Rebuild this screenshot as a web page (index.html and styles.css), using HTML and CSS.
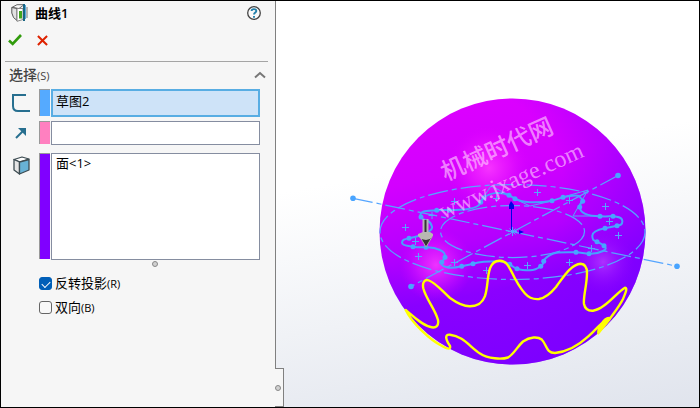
FILE: index.html
```html
<!DOCTYPE html>
<html lang="zh-CN">
<head>
<meta charset="utf-8">
<meta name="viewport" content="width=device-width, initial-scale=1">
<title>曲线1</title>
<link rel="stylesheet" href="styles.css">
</head>
<body>
<main class="app">
  <aside class="panel">
    <header class="title-bar">
      <svg class="title-icon" width="17" height="18" viewBox="0 0 17 18" aria-hidden="true">
        <path d="M.8 3.500 6 .7h7L8 4.500z" fill="#fafafa" stroke="#666"/>
        <path d="M.8 3.500 6 4.500v12l-3.500-3L.8 9z" fill="#e2e2e2" stroke="#555"/>
        <path d="M6 4.500h6v11l-6 1.800z" fill="#fff" stroke="#888"/>
        <path d="M9.500 7v7.500" stroke="#42a51c" stroke-width="3"/>
        <path d="M13 0v17" stroke="#176583" stroke-width="2"/>
        <path d="M14.500 1v14" stroke="#5aaada"/>
        <path d="M16 3v11" stroke="#777"/>
      </svg>
      <h1 class="title">曲线1</h1>
      <button class="icon-button help" type="button" aria-label="帮助">
        <svg width="14" height="14" viewBox="0 0 14 14"><circle cx="7" cy="7" r="6.300" fill="#fafafa" stroke="#444" stroke-width="1.300"/><path d="M4.700 5V4.200C5 2.700 9.300 2.500 9.300 5 9.300 6.500 7 6.500 7 8.500M7 10v1.800" fill="none" stroke="#2380aa" stroke-width="1.900"/></svg>
      </button>
    </header>
    <div class="actions">
      <button class="icon-button" type="button" aria-label="确定">
        <svg width="14" height="12" viewBox="0 0 14 12"><path d="M1 6.500 4.700 10 13 1" fill="none" stroke="#319b0c" stroke-width="2.600"/></svg>
      </button>
      <button class="icon-button" type="button" aria-label="取消">
        <svg width="11" height="11" viewBox="0 0 12 12"><path d="M1 1l10 10M11 1 1 11" fill="none" stroke="#de2200" stroke-width="2.200"/></svg>
      </button>
    </div>
    <section class="group">
      <button class="group-head" type="button" aria-expanded="true">
        <span class="group-name">选择<small>(S)</small></span>
        <svg width="12" height="8" viewBox="0 0 12 8" aria-hidden="true"><path d="M1 6.500 6 2l5 4.500" fill="none" stroke="#777" stroke-width="2"/></svg>
      </button>
      <div class="fields">
        <div class="field">
          <label class="field-icon" for="sketch" aria-label="草图">
            <svg width="18" height="18" viewBox="0 0 18 18"><path d="M14 1H1v11q0 5 5 5h12" fill="none" stroke="#276f8f" stroke-width="2"/></svg>
          </label>
          <span class="swatch blue"></span>
          <input class="box active" id="sketch" type="text" value="草图2">
        </div>
        <div class="field">
          <label class="field-icon" for="direction" aria-label="方向">
            <svg width="12" height="12" viewBox="0 0 12 12"><path d="M1 11 8 4" stroke="#276f8f" stroke-width="2"/><path d="M3 1h8v8z" fill="#276f8f"/></svg>
          </label>
          <span class="swatch pink"></span>
          <input class="box" id="direction" type="text">
        </div>
        <div class="field tall">
          <label class="field-icon face" for="faces" aria-label="面">
            <svg width="17" height="19" viewBox="0 0 17 19"><g stroke="#3d4c52" stroke-width="1.300" stroke-linejoin="round"><path d="M1 3.500 9 1l7 2-9 3z" fill="#fff"/><path d="M1 3.500 6.500 6v12L1 14z" fill="#e5e5e5"/><path d="M6.500 6 16 3.500V14l-9.500 4z" fill="#68b2d6"/></g></svg>
          </label>
          <span class="swatch violet"></span>
          <textarea class="box" id="faces">面&lt;1&gt;</textarea>
        </div>
      </div>
      <div class="grip-row"><span class="grip"></span></div>
      <div class="options">
        <label class="option"><input type="checkbox" checked><span>反转投影<small>(R)</small></span></label>
        <label class="option"><input type="checkbox"><span>双向<small>(B)</small></span></label>
      </div>
    </section>
    <div class="splitter"><span class="grip"></span></div>
  </aside>

  <section class="viewport" aria-label="模型视图">
    <svg class="scene" viewBox="276 1 423 406">
      <defs>
        <linearGradient id="body" x1=".4" y1="0" x2=".6" y2="1">
          <stop offset="0" stop-color="#dc00ff"/><stop offset=".25" stop-color="#d300ff"/><stop offset=".5" stop-color="#b500ff"/><stop offset=".7" stop-color="#8c00ff"/><stop offset="1" stop-color="#8600ff"/>
        </linearGradient>
        <radialGradient id="shade" gradientUnits="userSpaceOnUse" cx="460" cy="190" r="205">
          <stop offset=".5" stop-color="#7400ff" stop-opacity="0"/><stop offset="1" stop-color="#7400ff" stop-opacity=".6"/>
        </radialGradient>
        <radialGradient id="glow"><stop offset="0" stop-color="#ff40ff" stop-opacity=".8"/><stop offset=".5" stop-color="#fb28ff" stop-opacity=".4"/><stop offset="1" stop-color="#e000ff" stop-opacity="0"/></radialGradient>
        <radialGradient id="glow-soft"><stop offset="0" stop-color="#b63cff" stop-opacity=".8"/><stop offset="1" stop-color="#9500ff" stop-opacity="0"/></radialGradient>
      </defs>
      <circle cx="512.500" cy="231.500" r="133" fill="url(#body)"/>
      <circle cx="512.500" cy="231.500" r="133" fill="url(#shade)"/>
      <circle cx="489" cy="168" r="42" fill="url(#glow)"/>
      <circle cx="436" cy="265" r="37" fill="url(#glow)"/>
      <circle cx="603" cy="262" r="32" fill="url(#glow-soft)"/>

      <g class="construction">
        <ellipse cx="512.500" cy="232" rx="132.500" ry="47.500"/>
        <ellipse cx="512.500" cy="231.500" rx="72" ry="26"/>
        <path d="M353 198.300 677 266.300M618 175.500 411 286.500"/>
      </g>
      <path class="marks" d="M402 227.500h7m-3.500-3.500v7M451 201.500h7m-3.500-3.500v7M428.500 215.500h7m-3.500-3.500v7M493 198.500h7m-3.500-3.500v7M534 192.500h7m-3.500-3.500v7M566 200.500h7m-3.500-3.500v7M602 206.500h7m-3.500-3.500v7M606 221.500h7m-3.500-3.500v7M412 241.500h7m-3.500-3.500v7M415 256.500h7m-3.500-3.500v7M451 262.500h7m-3.500-3.500v7M483 270.500h7m-3.500-3.500v7M615 235.500h7m-3.500-3.500v7M588 248.500h7m-3.500-3.500v7M524 265.500h7m-3.500-3.500v7M566 262.500h7m-3.500-3.500v7"/>
      <path class="marks" d="M480 202 491 186l18 9M515 199l15 7 22-5M563 197l25-7-15 26 27 0"/>
      <path class="sketch" d="M421 217C418 210 429 211 436.700 210.300S457 211 468 209 479 205 480.700 202.300 482 199 484 197.700C489 193 500 191 509 195.300S519 202 530 202.300 546 202 552 200.700 560 198 563 197.300 578 194 580 197 584 200 582.700 201.300 579 205 579.700 207C580 214 589 216 600 216.300S609 216 613 216.300 622 217 622.300 221 620 225 617 225.700 609 227.500 605 228.300 592 231 592.300 236 594 240 597 241.700 602 244 604 245.700 607 249 603 251 594 254 589 253.700 580 252.300 576 252.300 561 252 556.700 252.700 545 257 543.700 261.300 543 264.500 540.700 266.300 535 270.300 530 270.300 520 269.700 517 268.700 512 266 509.700 264.300 504 261.300 496.700 261.300 480 262 473 263.700 465 265.500 461.700 266.300 451 268.500 446.700 267.300 441 265 441.700 262.300 445 259.500 445 257.300 446 253 440 250 431 247.300 426 247.300 417 247.500 413 246.700 402 246 402 242.700 405 239 409 238.300 417 236.500 421.700 235 433 230 432 226.700 430 222 428 221 422 220 421 217Z"/>
      <g class="points">
        <circle cx="353" cy="198.300" r="2.800"/><circle cx="677" cy="266.300" r="2.800"/><circle cx="618" cy="175.500" r="2.800"/><circle cx="411" cy="286.500" r="2.800"/>
        <circle cx="421" cy="217" r="2.500"/><circle cx="436.700" cy="210.300" r="2.500"/><circle cx="449.300" cy="210.300" r="2.500"/><circle cx="480.700" cy="202.300" r="2.500"/><circle cx="484" cy="197.700" r="2.500"/><circle cx="509" cy="195.300" r="2.500"/><circle cx="515" cy="198.700" r="2.500"/><circle cx="552" cy="200.700" r="2.500"/><circle cx="563" cy="197.300" r="2.500"/><circle cx="582.700" cy="201.300" r="2.500"/><circle cx="579.700" cy="207" r="2.500"/><circle cx="600" cy="216.300" r="2.500"/><circle cx="613" cy="216.300" r="2.500"/><circle cx="617" cy="225.700" r="2.500"/><circle cx="605" cy="228.300" r="2.500"/><circle cx="597" cy="241.700" r="2.500"/><circle cx="604" cy="245.700" r="2.500"/><circle cx="589" cy="253.700" r="2.500"/><circle cx="576" cy="252.300" r="2.500"/><circle cx="543.700" cy="261.300" r="2.500"/><circle cx="540.700" cy="266.300" r="2.500"/><circle cx="517" cy="268.700" r="2.500"/><circle cx="509.700" cy="264.300" r="2.500"/><circle cx="473" cy="263.700" r="2.500"/><circle cx="461.700" cy="266.300" r="2.500"/><circle cx="441.700" cy="262.300" r="2.500"/><circle cx="445" cy="257.300" r="2.500"/><circle cx="426" cy="247.300" r="2.500"/><circle cx="413" cy="246.700" r="2.500"/><circle cx="409" cy="238.300" r="2.500"/>
      </g>
      <path d="M511.500 231V206" stroke="#0000e8" fill="none"/>
      <path d="M511 201l3 4v4h-5v-4zM519 230l5 2-5 2z" fill="#0000e8"/>
      <path class="marks" d="M508 231.500h9m-4.500-4.500v9m-3-7.500 6 6m0-6-6 6"/>

      <path class="curve" d="M405.700 310C414 317 423 326 431.700 327.300 436 328 439 326 438 320 435 309 426 299 423.300 288.300 422 282 425 279 429 280.500 436 283 443 292 450 298 457 303 464 306.500 470 306.300 477 306 482 304 485 296 488 287 487 277 490 268.300 492 263 496 260.500 500 260.700 506 261 508 265 511.700 272 516 281 520 288 525 293.500 529 298 534 299.500 539 299 546 298 551 293 556 287 564 276 571 264.500 580.700 263.700 585 264 587 268 587 273 587 285 583 297 584 304 585 309 588 311 593 310.700 605 309 616 293 625 287.700 628 288 625 294 623 299 619 307 613 314 609 320L598.300 333.300C598 328 604 318 609 318 602 321 598 328 588 336.700 579 345 567 352 555 353 546 353 547 345 541.700 339.500 538 336.500 530 336.500 523 341.500 517 347 514 354 508 357.500 502 359.500 488 359 480 353.500 470 347 463 336 450 334.700 444 334 446 340 450 346 451 350 447 349 442 346 430 340 412 323 405.700 310Z"/>
      <path d="M608 317q2 3-2 8t-8 8q-1-6 4-11t6-5z" fill="#ff0"/>

      <path d="M424 220h4v14h-4z" fill="#333"/><path d="M423.500 219v15M427.500 219v15" stroke="#b8b4b8" stroke-width="2"/>
      <path d="M420 237h12l-6 10z" fill="#343434" stroke="#aaa"/><path d="M418 234l5-2h7l3 2v2l-3 3-4 1-5-1-3-3z" fill="#b8b8b2"/>

      <g class="watermark" transform="rotate(-24 504 165)">
        <text class="watermark-name" x="504" y="156">机械时代网</text>
        <text class="watermark-site" x="504" y="190">www.jxage.com</text>
      </g>
    </svg>
  </section>
</main>
</body>
</html>
```

FILE: styles.css
```css
* { box-sizing: border-box; }

body {
  margin: 0;
  color: #000;
  font: 13px/20px "Open Sans", "Noto Sans CJK SC", sans-serif;
}

.app {
  display: flex;
  min-height: 100vh;
  border: 1px solid #000;
}

.panel {
  position: relative;
  flex: 0 0 275px;
  padding: 2px 7px 0 4px;
  border-right: 1px solid #808080;
  background: #f6f6f6;
}

.title-bar {
  display: flex;
  align-items: center;
  gap: 7px;
  padding: 0 7px 0 6px;
}

.title {
  flex: 1;
  margin: 0;
  font-size: 13px;
  font-weight: 600;
}

.icon-button {
  display: flex;
  padding: 0;
  border: 0;
  background: none;
}

.actions {
  display: flex;
  align-items: center;
  gap: 15px;
  height: 39px;
  padding: 0 0 4px 3px;
  border-bottom: 1px solid #a5a5a5;
}

.group-head {
  display: flex;
  align-items: center;
  justify-content: space-between;
  width: 100%;
  height: 27px;
  padding: 0 2px 2px 4px;
  border: 0;
  background: none;
  color: #444;
  font: inherit;
  font-size: 14px;
  font-weight: 500;
}

small {
  font-size: 11px;
  line-height: 1;
}

.fields {
  display: grid;
  gap: 8px;
  padding-right: 8px;
}

.field {
  display: grid;
  grid-template-columns: 34px 11px 1fr;
  height: 24px;
}

.field.tall { height: 107px; }

.field-icon {
  display: flex;
  align-items: center;
  justify-content: center;
  padding-right: 2px;
}

.field-icon.face {
  align-items: flex-start;
  padding-top: 3px;
}

.swatch {
  margin-bottom: 1px;
  border-top: 1px solid #999;
  border-left: 1px solid #999;
}

.blue { background: #55aaff; }
.pink { background: #ff80c0; }
.violet { background: #8000ff; }

.box {
  height: 100%;
  min-width: 0;
  margin: 0 0 0 1px;
  padding: 0 4px 4px;
  border: 1px solid #858da0;
  border-radius: 0;
  outline: 0;
  background: #fff;
  color: #000;
  font: inherit;
  line-height: 18px;
  resize: none;
}

.box.active {
  padding: 0 3px 6px;
  border: 2px solid #58ade3;
  background: #cee3f8;
  line-height: 14px;
}

.grip {
  display: block;
  width: 6px;
  height: 6px;
  border: 1px solid #888;
  border-radius: 50%;
  background: #d0d0d0;
}

.grip-row {
  display: flex;
  justify-content: center;
  padding: 1px 0 0 36px;
}

.options {
  display: grid;
  gap: 4px;
  padding: 6px 0 0 34px;
}

.option {
  display: flex;
  align-items: center;
  gap: 3px;
  height: 20px;
}

.option input {
  display: grid;
  place-items: center;
  width: 13px;
  height: 13px;
  margin: 0;
  border: 1px solid #666;
  border-radius: 3px;
  background: #f8f8f8;
  appearance: none;
}

.option input:checked {
  border-color: #005fb8;
  background: #005fb8;
}

.option input:checked::before {
  content: "";
  width: 7px;
  height: 4px;
  border: solid #fff;
  border-width: 0 0 1px 1px;
  transform: rotate(-45deg);
}

.splitter {
  position: absolute;
  right: -9px;
  bottom: 0;
  display: flex;
  align-items: center;
  width: 9px;
  height: 39px;
  border: solid #808080;
  border-width: 1px 1px 1px 0;
  background: #f6f6f6;
  z-index: 1;
}

.viewport {
  display: flex;
  flex: 1;
  min-width: 0;
  background: linear-gradient(170deg, #fff 40%, #f0f2f6 70%, #e0e4ed 100%);
}

.scene {
  flex: 1;
  width: 100%;
  min-width: 0;
}

.construction {
  fill: none;
  stroke: #55a5ff;
  stroke-width: 1.25;
  stroke-dasharray: 20 4 5 4;
}

.marks {
  fill: none;
  stroke: #55a5ff;
}

.sketch {
  fill: none;
  stroke: #48a0ff;
  stroke-width: 2;
}

.points { fill: #48a4ff; }

.curve {
  fill: none;
  stroke: #ff0;
  stroke-width: 2.4;
  stroke-linejoin: round;
}

.watermark {
  fill: #ffc8ff;
  fill-opacity: .65;
  text-anchor: middle;
}

.watermark-name { font: 500 24px "Noto Sans CJK SC", sans-serif; }
.watermark-site { font: 24px "Liberation Serif", serif; }
```
